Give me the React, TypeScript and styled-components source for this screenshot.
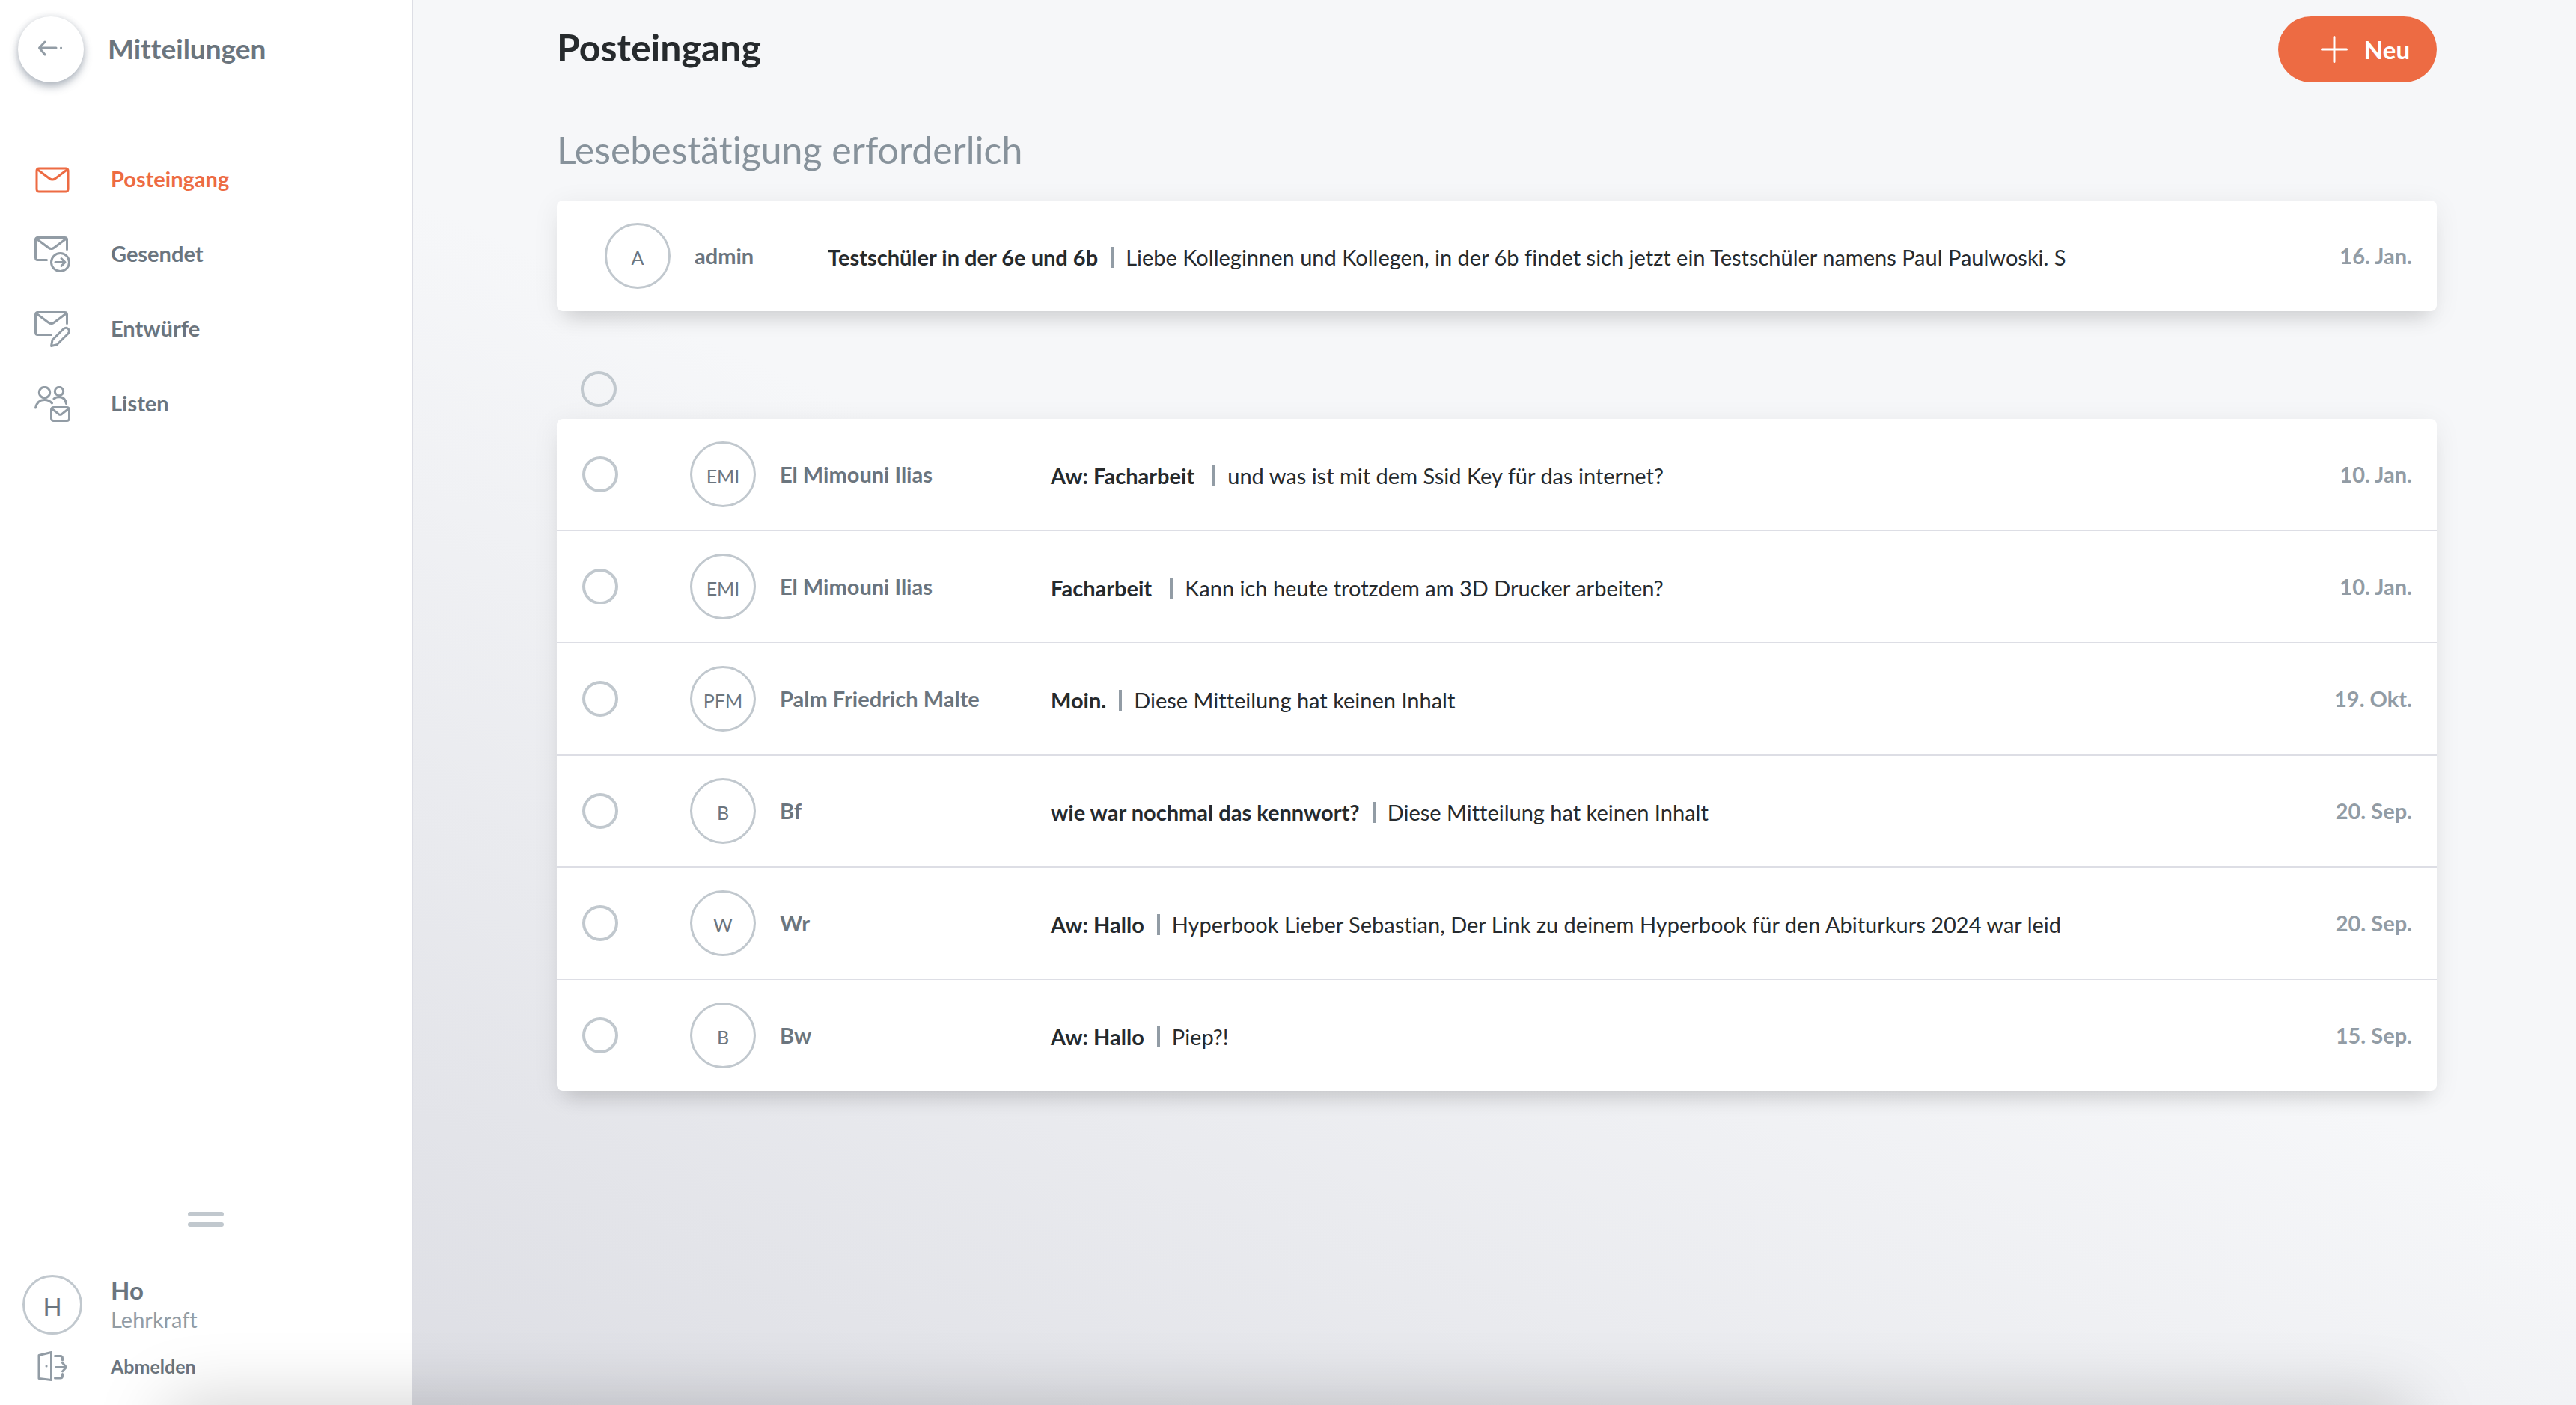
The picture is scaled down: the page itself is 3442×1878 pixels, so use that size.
import React from "react";
import styled, { createGlobalStyle } from "styled-components";

const color = {
  accent: "#ed6b43",
  ink: "#262a2d",
  text: "#6b757e",
  muted: "#929ca5",
  line: "#c1c8ce",
  divider: "#dddee5",
};

const GlobalStyle = createGlobalStyle`
  *, *::before, *::after { box-sizing: border-box; }
  body {
    margin: 0;
    font-family: Lato, "Open Sans", sans-serif;
    font-size: 29px;
    font-variant-ligatures: no-common-ligatures;
    line-height: 40px;
    color: ${color.text};
  }
  button { font: inherit; color: inherit; border: 0; padding: 0; background: none; cursor: pointer; }
  a { color: inherit; text-decoration: none; }
  h1, h2, p, ul { margin: 0; padding: 0; }
  ul { list-style: none; }
`;

const Page = styled.div`
  display: flex;
  min-height: 100vh;
  overflow: hidden;
`;

const Sidebar = styled.aside`
  display: flex;
  flex-direction: column;
  flex: none;
  width: 552px;
  border-right: 2px solid ${color.divider};
  background: #fff;
`;

const SidebarHeader = styled.header`
  display: flex;
  align-items: center;
  gap: 32px;
  padding: 22px 24px 0;
`;

const BackButton = styled.button`
  display: flex;
  align-items: center;
  width: 88px;
  height: 88px;
  padding-left: 26px;
  border-radius: 50%;
  background: #fff;
  color: ${color.muted};
  box-shadow: 0 6px 12px rgba(80, 95, 115, 0.42), 0 0 8px rgba(80, 95, 115, 0.16);
`;

const SidebarTitle = styled.p`
  font-size: 37px;
  font-weight: 700;
  line-height: 48px;
  padding-bottom: 2px;
`;

const NavList = styled.ul`
  padding: 80px 0 0 46px;
`;

const NavLink = styled.a<{ $active?: boolean }>`
  display: flex;
  align-items: center;
  gap: 54px;
  height: 100px;
  font-weight: 700;
  color: ${(p) => (p.$active ? color.accent : color.text)};

  svg {
    color: ${(p) => (p.$active ? color.accent : color.muted)};
  }
`;

const NavLabel = styled.span`
  padding-bottom: 2px;
`;

const SidebarFooter = styled.footer`
  display: flex;
  flex-direction: column;
  margin-top: auto;
  padding: 0 30px 32px;
`;

const DragHandle = styled.button`
  align-self: center;
  width: 48px;
  height: 20px;
  margin-bottom: 64px;

  &::before,
  &::after {
    content: "";
    display: block;
    height: 6px;
    border-radius: 3px;
    background: ${color.line};
  }

  &::after {
    margin-top: 8px;
  }
`;

const User = styled.div`
  display: flex;
  align-items: center;
  gap: 38px;
`;

const UserName = styled.p`
  font-size: 33px;
  font-weight: 700;
`;

const UserRole = styled.p`
  color: ${color.muted};
`;

const LogoutButton = styled.button`
  display: flex;
  align-items: center;
  align-self: flex-start;
  gap: 58px;
  height: 40px;
  margin-top: 22px;
  padding-left: 20px;
  font-size: 25px;
  font-weight: 700;

  svg {
    color: ${color.muted};
  }
`;

const Avatar = styled.span<{ $large?: boolean }>`
  display: flex;
  flex: none;
  align-items: center;
  justify-content: center;
  width: ${(p) => (p.$large ? 80 : 88)}px;
  height: ${(p) => (p.$large ? 80 : 88)}px;
  padding-top: 4px;
  border: 3px solid ${color.line};
  border-radius: 50%;
  font-size: ${(p) => (p.$large ? 33 : 25)}px;
`;

const Main = styled.main`
  flex: 1;
  min-width: 0;
  padding: 22px 186px 0 192px;
  background: linear-gradient(25deg, #dddee4 0%, #f6f7f9 50%);
`;

const Toolbar = styled.header`
  display: flex;
  align-items: center;
  justify-content: space-between;
`;

const Title = styled.h1`
  padding-bottom: 6px;
  font-size: 50px;
  font-weight: 700;
  line-height: 60px;
  color: ${color.ink};
`;

const NewButton = styled.button`
  display: flex;
  align-items: center;
  gap: 22px;
  height: 88px;
  padding: 0 36px 0 57px;
  border-radius: 44px;
  background: ${color.accent};
  color: #fff;
  font-size: 33px;
  font-weight: 700;
`;

const SectionTitle = styled.h2`
  padding: 60px 0 38px;
  font-size: 50px;
  font-weight: 400;
  line-height: 60px;
  color: #87929b;
`;

const Card = styled.ul`
  border-radius: 8px;
  background: #fff;
  box-shadow: 0 20px 24px -12px rgba(0, 0, 0, 0.12), 0 6px 36px rgba(0, 0, 0, 0.07);
`;

const Row = styled.li`
  display: flex;
  align-items: center;
  height: 148px;
  padding: 0 33px 0 34px;

  & + & {
    height: 150px;
    border-top: 2px solid ${color.divider};
  }
`;

const RoundCheck = styled.input`
  appearance: none;
  flex: none;
  width: 48px;
  height: 48px;
  margin: 0;
  border: 4px solid ${color.line};
  border-radius: 50%;
`;

const SelectAll = styled.div`
  display: flex;
  padding: 80px 32px 16px;
`;

const Sender = styled.div<{ $pinned?: boolean }>`
  display: flex;
  flex: none;
  align-items: center;
  gap: 32px;
  width: ${(p) => (p.$pinned ? 298 : 482)}px;
  margin-left: ${(p) => (p.$pinned ? 30 : 96)}px;
  font-weight: 700;
  color: ${color.text};

  ${Avatar} {
    font-weight: 400;
  }
`;

const Message = styled.a`
  display: flex;
  flex: 1;
  align-items: center;
  min-width: 0;
  padding-top: 4px;
  color: ${color.ink};
  white-space: pre;
`;

const Subject = styled.span`
  padding-right: 17px;
  font-weight: 700;
`;

const Preview = styled.span`
  display: flex;
  align-items: center;
  gap: 16px;

  &::before {
    content: "";
    width: 4px;
    height: 28px;
    background: ${color.muted};
  }
`;

const DateText = styled.time`
  flex: none;
  font-weight: 700;
  color: ${color.muted};
`;

/* Soft shade cast upward by the panel parked under the bottom edge. */
const BottomShade = styled.div`
  position: fixed;
  left: 224px;
  right: 224px;
  top: 100%;
  height: 80px;
  box-shadow: 0 0 96px rgba(0, 0, 0, 0.21);
  pointer-events: none;
`;

const Icon = ({ size = 48, children }: { size?: number; children: React.ReactNode }) => (
  <svg
    width={size}
    height={size}
    viewBox={`0 0 ${size} ${size}`}
    fill="none"
    stroke="currentColor"
    strokeWidth={3}
    strokeLinecap="round"
    strokeLinejoin="round"
    aria-hidden="true"
  >
    {children}
  </svg>
);

const BackIcon = () => (
  <Icon size={36}>
    <path d="M10 8L2.500 16L10 25M3 16H25M31.500 16H31.600" />
  </Icon>
);

const InboxIcon = () => (
  <Icon>
    <rect x="3" y="9" width="42" height="31" rx="3" />
    <path d="M4 10.500L20 22.500Q24 25.500 28 22.500L44 10.500" />
  </Icon>
);

const SentIcon = () => (
  <Icon>
    <path d="M43.500 17.500V4.500Q43.500 1.500 40.500 1.500H4.500Q1.500 1.500 1.500 4.500V28.500Q1.500 31.500 4.500 31.500H16.500" />
    <path d="M2.500 3L18.500 15Q22.500 18 26.500 15L42.500 3" />
    <circle cx="34.500" cy="34.500" r="12" />
    <path d="M28 34.500H41M36 29.500L41 34.500L36 39.500" />
  </Icon>
);

const DraftIcon = () => (
  <Icon>
    <path d="M43.500 16.500V4.500Q43.500 1.500 40.500 1.500H4.500Q1.500 1.500 1.500 4.500V28.500Q1.500 31.500 4.500 31.500H22.500" />
    <path d="M2.500 3L18.500 15Q22.500 18 26.500 15L42.500 3" />
    <path d="M22.500 46.500L24 38.500L39 23.500Q42.500 21 45.200 23.700Q48 26.500 45 30L30 44.800Z" />
  </Icon>
);

const ListIcon = () => (
  <Icon>
    <circle cx="13.500" cy="8.500" r="7.200" />
    <circle cx="33" cy="7" r="5.700" />
    <path d="M1.500 29Q4 18.500 13.500 18.500Q19.500 18.500 23.500 23M26 17Q29 14.500 33 14.500Q41.500 15 42.500 23.500" />
    <rect x="22.500" y="28.500" width="24" height="18" rx="3" />
    <path d="M23.500 30.500L32.500 37.700Q34.500 39 36.500 37.700L45.500 30.500" />
  </Icon>
);

const LogoutIcon = () => (
  <Icon size={40}>
    <path d="M2 5.500L18.500 1.500V38.500L2 36.500ZM12 20H12.100" />
    <path d="M23.500 6.500H30.500Q33.500 6.500 33.500 9.500V12M23.500 36H30.500Q33.500 36 33.500 33V30.500M24.500 21.500H38.500M33.500 15.500L38.500 21.500L33.500 27" />
  </Icon>
);

const PlusIcon = () => (
  <Icon size={36}>
    <path d="M18 1.500V34.500M1.500 18H34.500" />
  </Icon>
);

const navItems = [
  { label: "Posteingang", icon: <InboxIcon />, active: true },
  { label: "Gesendet", icon: <SentIcon /> },
  { label: "Entwürfe", icon: <DraftIcon /> },
  { label: "Listen", icon: <ListIcon /> },
];

type Mail = { initials: string; sender: string; subject: string; preview: string; date: string };

const pinned: Mail = {
  initials: "A",
  sender: "admin",
  subject: "Testschüler in der 6e und 6b",
  preview:
    "Liebe Kolleginnen und Kollegen, in der 6b findet sich jetzt ein Testschüler namens Paul Paulwoski. S",
  date: "16. Jan.",
};

const mails: Mail[] = [
  { initials: "EMI", sender: "El Mimouni Ilias", subject: "Aw: Facharbeit ", preview: "und was ist mit dem Ssid Key für das internet?", date: "10. Jan." },
  { initials: "EMI", sender: "El Mimouni Ilias", subject: "Facharbeit ", preview: "Kann ich heute trotzdem am 3D Drucker arbeiten?", date: "10. Jan." },
  { initials: "PFM", sender: "Palm Friedrich Malte", subject: "Moin.", preview: "Diese Mitteilung hat keinen Inhalt", date: "19. Okt." },
  { initials: "B", sender: "Bf", subject: "wie war nochmal das kennwort?", preview: "Diese Mitteilung hat keinen Inhalt", date: "20. Sep." },
  { initials: "W", sender: "Wr", subject: "Aw: Hallo", preview: "Hyperbook Lieber Sebastian, Der Link zu deinem Hyperbook für den Abiturkurs 2024 war leid", date: "20. Sep." },
  { initials: "B", sender: "Bw", subject: "Aw: Hallo", preview: "Piep?!", date: "15. Sep." },
];

const MailRow = ({ mail, isPinned }: { mail: Mail; isPinned?: boolean }) => (
  <Row>
    {!isPinned && <RoundCheck type="checkbox" aria-label={`${mail.subject} auswählen`} />}
    <Sender $pinned={isPinned}>
      <Avatar>{mail.initials}</Avatar>
      <span>{mail.sender}</span>
    </Sender>
    <Message href="#">
      <Subject>{mail.subject}</Subject>
      <Preview>{mail.preview}</Preview>
    </Message>
    <DateText>{mail.date}</DateText>
  </Row>
);

export default function App() {
  return (
    <>
      <GlobalStyle />
      <Page>
        <Sidebar>
          <SidebarHeader>
            <BackButton aria-label="Zurück">
              <BackIcon />
            </BackButton>
            <SidebarTitle>Mitteilungen</SidebarTitle>
          </SidebarHeader>
          <nav>
            <NavList>
              {navItems.map((item) => (
                <li key={item.label}>
                  <NavLink href="#" $active={item.active}>
                    {item.icon}
                    <NavLabel>{item.label}</NavLabel>
                  </NavLink>
                </li>
              ))}
            </NavList>
          </nav>
          <SidebarFooter>
            <DragHandle aria-label="Bereich verschieben" />
            <User>
              <Avatar $large>H</Avatar>
              <div>
                <UserName>Ho</UserName>
                <UserRole>Lehrkraft</UserRole>
              </div>
            </User>
            <LogoutButton>
              <LogoutIcon />
              Abmelden
            </LogoutButton>
          </SidebarFooter>
        </Sidebar>
        <Main>
          <Toolbar>
            <Title>Posteingang</Title>
            <NewButton>
              <PlusIcon />
              Neu
            </NewButton>
          </Toolbar>
          <SectionTitle>Lesebestätigung erforderlich</SectionTitle>
          <Card>
            <MailRow mail={pinned} isPinned />
          </Card>
          <SelectAll>
            <RoundCheck type="checkbox" aria-label="Alle auswählen" />
          </SelectAll>
          <Card>
            {mails.map((mail) => (
              <MailRow key={mail.sender + mail.subject} mail={mail} />
            ))}
          </Card>
        </Main>
      </Page>
      <BottomShade />
    </>
  );
}
